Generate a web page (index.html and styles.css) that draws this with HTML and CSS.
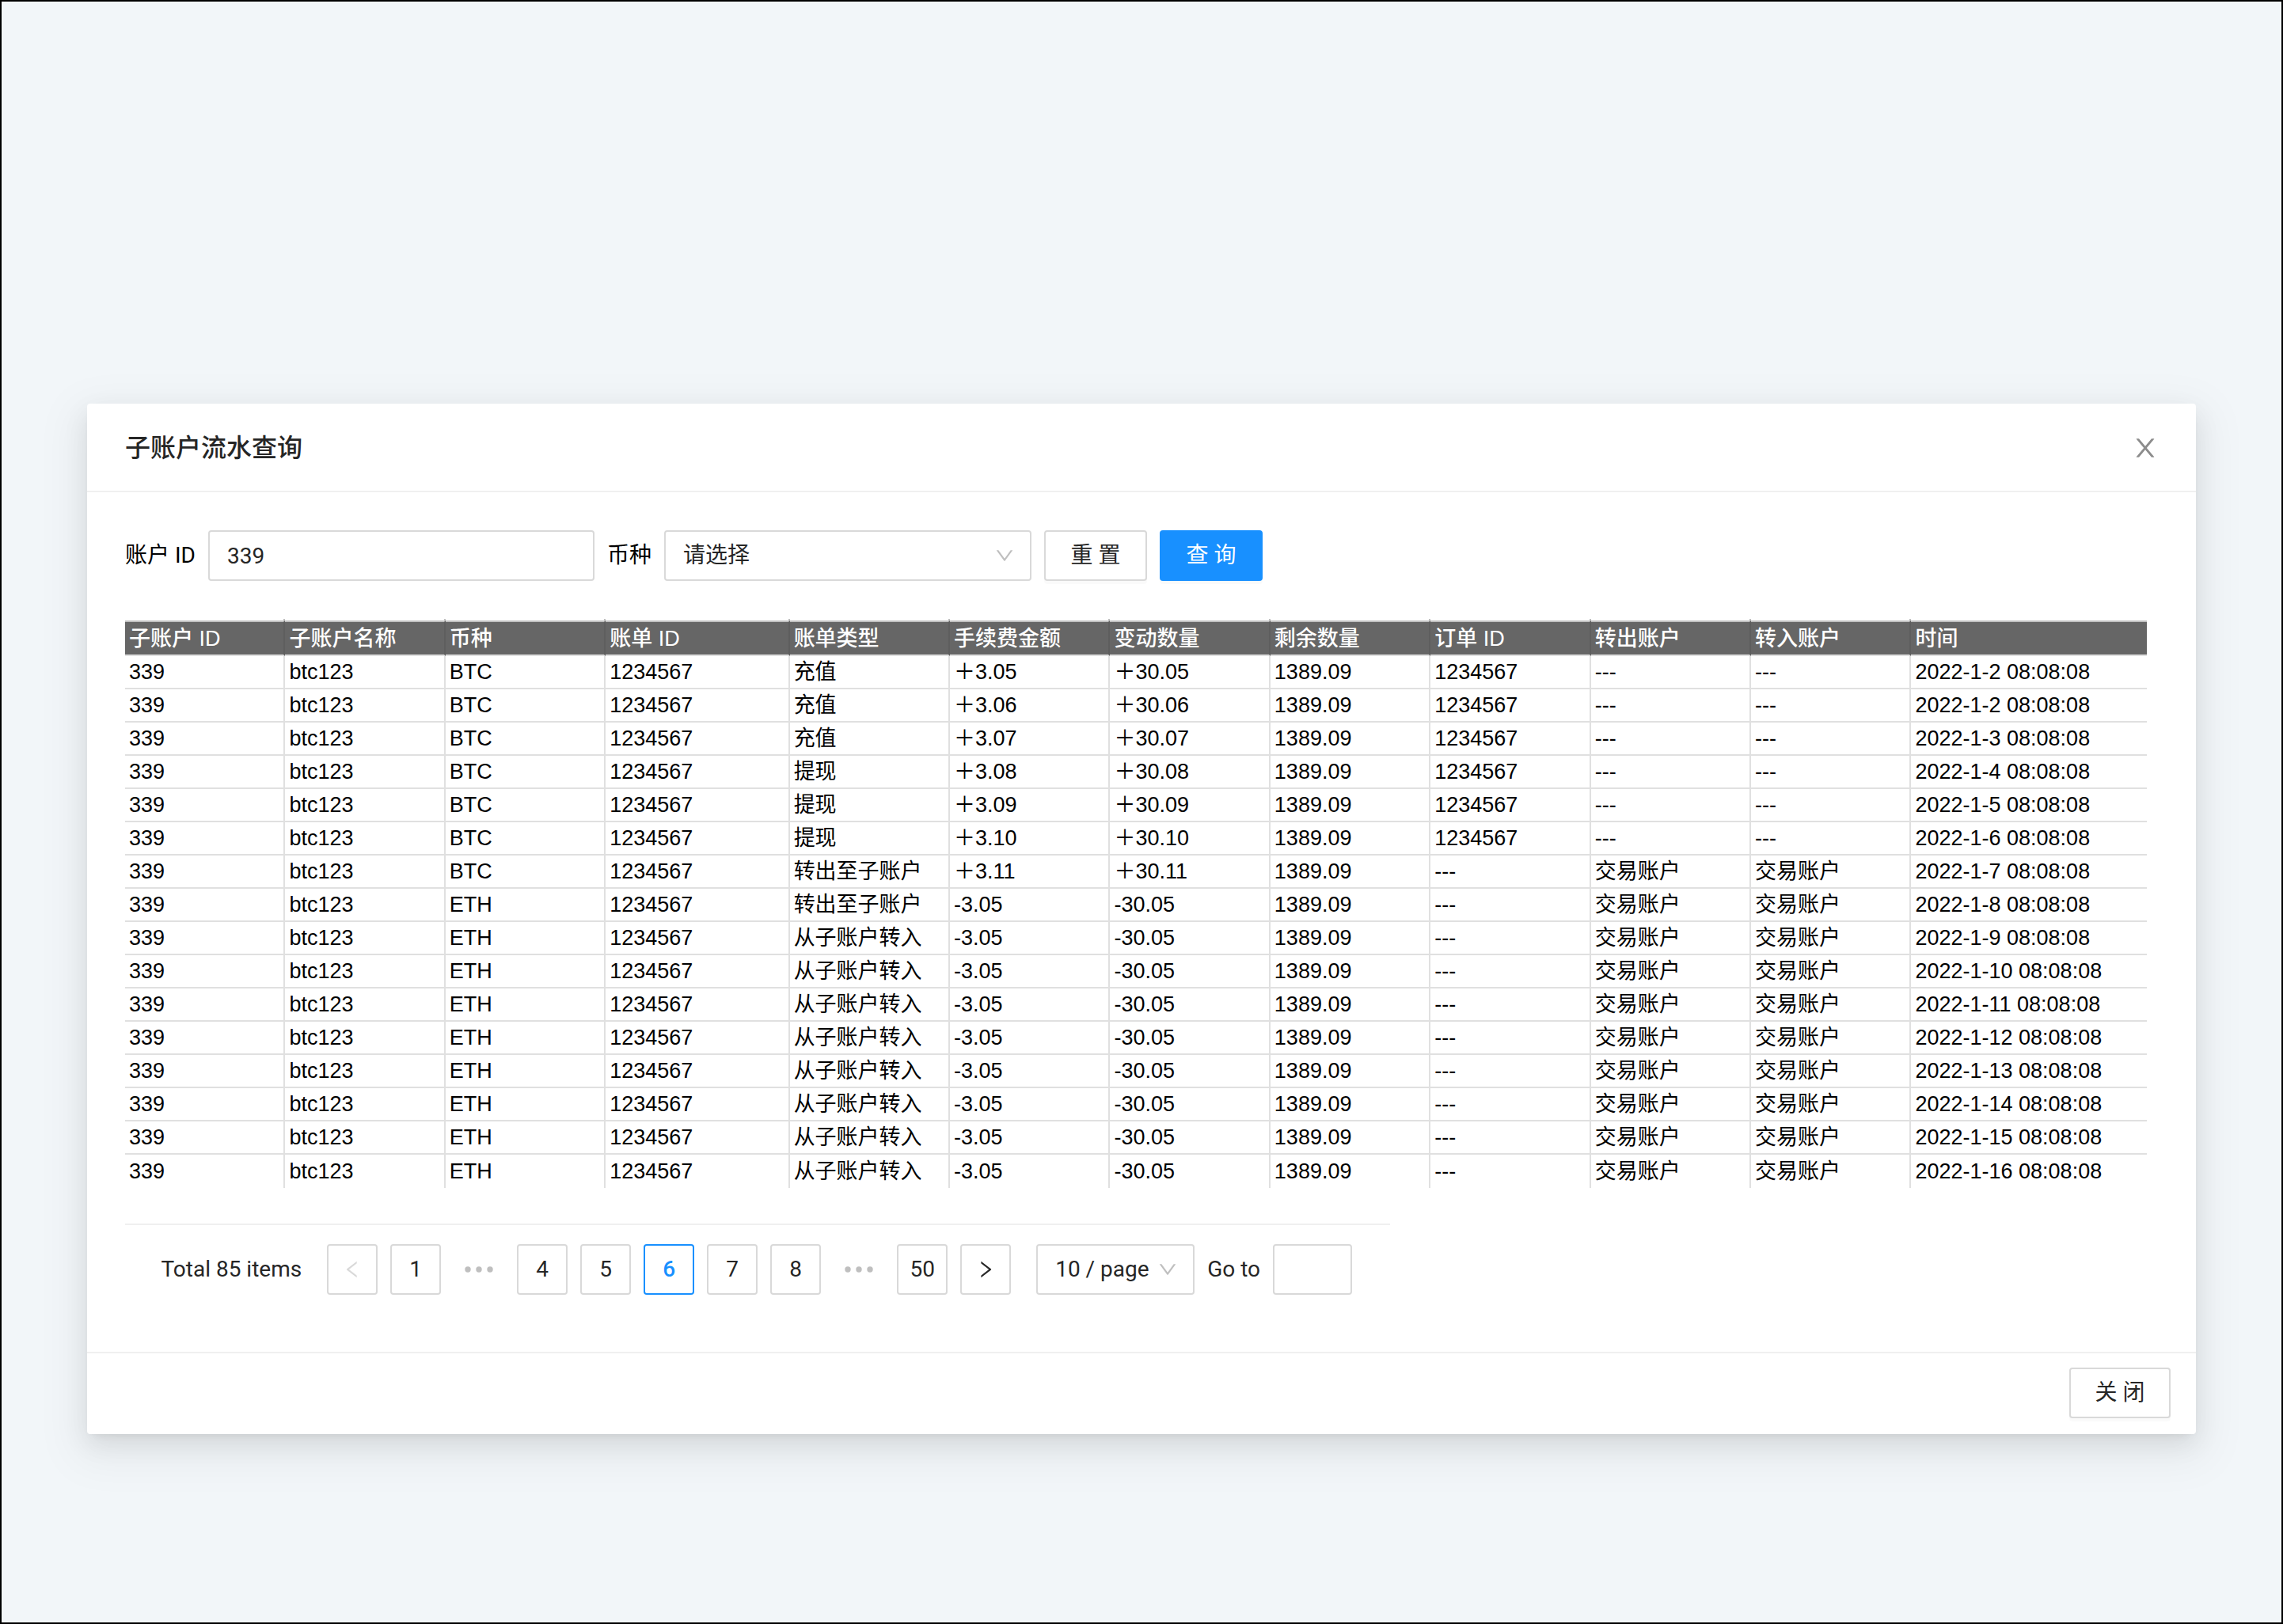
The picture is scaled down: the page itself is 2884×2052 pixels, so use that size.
FILE: index.html
```html
<!DOCTYPE html>
<html lang="zh-CN">
<head>
<meta charset="utf-8">
<meta name="viewport" content="width=device-width, initial-scale=1">
<title>子账户流水查询</title>
<link rel="stylesheet" href="styles.css">
</head>
<body>
<svg class="icon-defs" aria-hidden="true">
<symbol id="icon-close" viewBox="64 64 896 896"><path d="M563.8 512l262.5-312.9c4.4-5.2.7-13.1-6.1-13.1h-79.8c-4.7 0-9.2 2.1-12.3 5.7L511.6 449.8 295.1 191.7c-3-3.6-7.5-5.7-12.3-5.7H203c-6.8 0-10.5 7.9-6.1 13.1L459.4 512 196.9 824.9A7.95 7.95 0 0 0 203 838h79.8c4.7 0 9.2-2.1 12.3-5.7l216.5-258.1 216.5 258.1c3 3.6 7.5 5.7 12.3 5.7h79.8c6.8 0 10.5-7.9 6.1-13.1L563.8 512z"/></symbol>
<symbol id="icon-down" viewBox="64 64 896 896"><path d="M884 256h-75c-5.1 0-9.9 2.5-12.9 6.6L512 654.2 227.9 262.6c-3-4.1-7.8-6.6-12.9-6.6h-75c-6.5 0-10.3 7.4-6.5 12.7l352.6 486.1c12.8 17.6 39 17.6 51.7 0l352.6-486.1c3.9-5.3.1-12.7-6.4-12.7z"/></symbol>
<symbol id="icon-left" viewBox="64 64 896 896"><path d="M724 218.3V141c0-6.7-7.7-10.4-12.9-6.3L260.3 486.8a31.86 31.86 0 0 0 0 50.3l450.8 352.1c5.3 4.1 12.9.4 12.9-6.3v-77.3c0-4.9-2.3-9.6-6.1-12.6l-360-281 360-281.1c3.8-3 6.1-7.7 6.1-12.6z"/></symbol>
<symbol id="icon-right" viewBox="64 64 896 896"><path d="M765.7 486.8L314.9 134.7A7.97 7.97 0 0 0 302 141v77.3c0 4.9 2.3 9.6 6.1 12.6l360 281.1-360 281.1c-3.9 3-6.1 7.7-6.1 12.6V883c0 6.7 7.7 10.4 12.9 6.3l450.8-352.1a31.96 31.96 0 0 0 0-50.4z"/></symbol>
<symbol id="icon-dots" viewBox="0 0 36 8"><circle cx="4" cy="4" r="3.7"/><circle cx="18" cy="4" r="3.7"/><circle cx="32" cy="4" r="3.7"/></symbol>
</svg>
<main class="modal" role="dialog" aria-labelledby="modal-title">
<header class="modal-header">
<h1 class="modal-title" id="modal-title">子账户流水查询</h1>
<button class="modal-close" type="button" aria-label="关闭窗口"><svg><use href="#icon-close"/></svg></button>
</header>
<section class="modal-body">
<form class="filters">
<label for="account">账户 ID</label>
<input class="field account" id="account" type="text" value="339">
<label for="coin">币种</label>
<span class="select coin"><select class="field" id="coin"><option>请选择</option></select><svg class="arrow"><use href="#icon-down"/></svg></span>
<button class="btn" type="reset">重 置</button>
<button class="btn btn-primary" type="button">查 询</button>
</form>
<table class="records">
<colgroup><col><col><col><col class="wide"><col><col><col><col><col><col><col><col class="time"></colgroup>
<thead>
<tr><th>子账户 ID</th><th>子账户名称</th><th>币种</th><th>账单 ID</th><th>账单类型</th><th>手续费金额</th><th>变动数量</th><th>剩余数量</th><th>订单 ID</th><th>转出账户</th><th>转入账户</th><th>时间</th></tr>
</thead>
<tbody>
<tr><td>339</td><td>btc123</td><td>BTC</td><td>1234567</td><td>充值</td><td>＋3.05</td><td>＋30.05</td><td>1389.09</td><td>1234567</td><td>---</td><td>---</td><td>2022-1-2 08:08:08</td></tr>
<tr><td>339</td><td>btc123</td><td>BTC</td><td>1234567</td><td>充值</td><td>＋3.06</td><td>＋30.06</td><td>1389.09</td><td>1234567</td><td>---</td><td>---</td><td>2022-1-2 08:08:08</td></tr>
<tr><td>339</td><td>btc123</td><td>BTC</td><td>1234567</td><td>充值</td><td>＋3.07</td><td>＋30.07</td><td>1389.09</td><td>1234567</td><td>---</td><td>---</td><td>2022-1-3 08:08:08</td></tr>
<tr><td>339</td><td>btc123</td><td>BTC</td><td>1234567</td><td>提现</td><td>＋3.08</td><td>＋30.08</td><td>1389.09</td><td>1234567</td><td>---</td><td>---</td><td>2022-1-4 08:08:08</td></tr>
<tr><td>339</td><td>btc123</td><td>BTC</td><td>1234567</td><td>提现</td><td>＋3.09</td><td>＋30.09</td><td>1389.09</td><td>1234567</td><td>---</td><td>---</td><td>2022-1-5 08:08:08</td></tr>
<tr><td>339</td><td>btc123</td><td>BTC</td><td>1234567</td><td>提现</td><td>＋3.10</td><td>＋30.10</td><td>1389.09</td><td>1234567</td><td>---</td><td>---</td><td>2022-1-6 08:08:08</td></tr>
<tr><td>339</td><td>btc123</td><td>BTC</td><td>1234567</td><td>转出至子账户</td><td>＋3.11</td><td>＋30.11</td><td>1389.09</td><td>---</td><td>交易账户</td><td>交易账户</td><td>2022-1-7 08:08:08</td></tr>
<tr><td>339</td><td>btc123</td><td>ETH</td><td>1234567</td><td>转出至子账户</td><td>-3.05</td><td>-30.05</td><td>1389.09</td><td>---</td><td>交易账户</td><td>交易账户</td><td>2022-1-8 08:08:08</td></tr>
<tr><td>339</td><td>btc123</td><td>ETH</td><td>1234567</td><td>从子账户转入</td><td>-3.05</td><td>-30.05</td><td>1389.09</td><td>---</td><td>交易账户</td><td>交易账户</td><td>2022-1-9 08:08:08</td></tr>
<tr><td>339</td><td>btc123</td><td>ETH</td><td>1234567</td><td>从子账户转入</td><td>-3.05</td><td>-30.05</td><td>1389.09</td><td>---</td><td>交易账户</td><td>交易账户</td><td>2022-1-10 08:08:08</td></tr>
<tr><td>339</td><td>btc123</td><td>ETH</td><td>1234567</td><td>从子账户转入</td><td>-3.05</td><td>-30.05</td><td>1389.09</td><td>---</td><td>交易账户</td><td>交易账户</td><td>2022-1-11 08:08:08</td></tr>
<tr><td>339</td><td>btc123</td><td>ETH</td><td>1234567</td><td>从子账户转入</td><td>-3.05</td><td>-30.05</td><td>1389.09</td><td>---</td><td>交易账户</td><td>交易账户</td><td>2022-1-12 08:08:08</td></tr>
<tr><td>339</td><td>btc123</td><td>ETH</td><td>1234567</td><td>从子账户转入</td><td>-3.05</td><td>-30.05</td><td>1389.09</td><td>---</td><td>交易账户</td><td>交易账户</td><td>2022-1-13 08:08:08</td></tr>
<tr><td>339</td><td>btc123</td><td>ETH</td><td>1234567</td><td>从子账户转入</td><td>-3.05</td><td>-30.05</td><td>1389.09</td><td>---</td><td>交易账户</td><td>交易账户</td><td>2022-1-14 08:08:08</td></tr>
<tr><td>339</td><td>btc123</td><td>ETH</td><td>1234567</td><td>从子账户转入</td><td>-3.05</td><td>-30.05</td><td>1389.09</td><td>---</td><td>交易账户</td><td>交易账户</td><td>2022-1-15 08:08:08</td></tr>
<tr><td>339</td><td>btc123</td><td>ETH</td><td>1234567</td><td>从子账户转入</td><td>-3.05</td><td>-30.05</td><td>1389.09</td><td>---</td><td>交易账户</td><td>交易账户</td><td>2022-1-16 08:08:08</td></tr>
</tbody>
</table>
<nav class="pagination" aria-label="分页">
<span>Total 85 items</span>
<div class="pages">
<button class="page" type="button" aria-label="上一页" disabled><svg><use href="#icon-left"/></svg></button>
<button class="page" type="button">1</button>
<span class="dots"><svg><use href="#icon-dots"/></svg></span>
<button class="page" type="button">4</button>
<button class="page" type="button">5</button>
<button class="page active" type="button" aria-current="page">6</button>
<button class="page" type="button">7</button>
<button class="page" type="button">8</button>
<span class="dots"><svg><use href="#icon-dots"/></svg></span>
<button class="page" type="button">50</button>
<button class="page" type="button" aria-label="下一页"><svg><use href="#icon-right"/></svg></button>
</div>
<div class="jump">
<span class="select size"><select class="field" aria-label="每页条数"><option>10 / page</option></select><svg class="arrow"><use href="#icon-down"/></svg></span>
<label for="goto">Go to</label>
<input class="field goto" id="goto" type="text">
</div>
</nav>
</section>
<footer class="modal-footer"><button class="btn" type="button">关 闭</button></footer>
</main>
</body>
</html>
```

FILE: styles.css
```css
*, *::before, *::after { box-sizing: border-box; }

body {
  min-height: 100vh;
  margin: 0;
  padding: 508px 108px 238px;
  border: 2px solid #000;
  background: #f2f6f9;
  color: #262626;
  font: 28px/44px Roboto, "Noto Sans CJK SC", sans-serif;
}

button, input, select { font: inherit; color: inherit; }

svg { display: block; fill: currentColor; }

.icon-defs { position: absolute; width: 0; height: 0; }

.modal {
  border-radius: 4px;
  background: #fff;
  box-shadow:
    0 6px 12px -8px rgba(0, 0, 0, .12),
    0 12px 32px rgba(0, 0, 0, .08),
    0 18px 56px 16px rgba(0, 0, 0, .05);
}

.modal-header {
  display: flex;
  align-items: center;
  justify-content: space-between;
  padding: 32px 48px 30px;
  border-bottom: 2px solid #f0f0f0;
}

.modal-title { margin: 0; font-size: 32px; line-height: 48px; font-weight: 500; }

.modal-close { padding: 0; border: 0; background: none; color: #8c8c8c; }
.modal-close svg { width: 32px; height: 32px; }

.modal-body { padding: 48px 62px 72px 48px; }

.filters {
  display: flex;
  align-items: center;
  gap: 16px;
  margin-bottom: 50px;
  color: #000;
}

.field {
  width: 100%;
  height: 64px;
  padding: 0 22px;
  border: 2px solid #d9d9d9;
  border-radius: 4px;
  background: #fff;
  color: #262626;
  appearance: none;
}

.account { width: 488px; }
.goto { width: 100px; }

.select { position: relative; }
.coin { width: 464px; }
.size { width: 200px; }

.arrow {
  position: absolute;
  top: 20px;
  right: 22px;
  width: 24px;
  height: 24px;
  color: #bfbfbf;
  pointer-events: none;
}

.btn {
  min-width: 128px;
  height: 64px;
  padding: 0 30px;
  border: 2px solid #d9d9d9;
  border-radius: 4px;
  background: #fff;
  box-shadow: 0 4px 0 rgba(0, 0, 0, .02);
  color: #262626;
}

.filters .btn { min-width: 130px; }

.btn-primary { border-color: #1890ff; background: #1890ff; color: #fff; }
.filters .btn-primary { color: #fff; }

.records {
  width: 100%;
  table-layout: fixed;
  border-spacing: 0;
  color: #000;
  font: 27px/40px "Liberation Sans", "Noto Sans CJK SC", sans-serif;
}

/* Column widths are proportions of the table width */
.records col { width: 81px; }
.records .wide { width: 93px; }
.records .time { width: 119px; }

.records th, .records td {
  padding: 0 5px;
  border-right: 2px solid #e0e0e0;
  border-bottom: 2px solid #e0e0e0;
  text-align: left;
  font-weight: 400;
  white-space: nowrap;
}

.records th {
  position: relative;
  height: 45px;
  border-top: 2px solid #bfbfbf;
  border-right-color: #5e5e5e;
  background: #666;
  color: #fff;
  font-weight: 500;
}

/* Column rules reach slightly above the header */
.records th:not(:last-child)::after {
  content: "";
  position: absolute;
  top: -4px;
  right: -2px;
  width: 2px;
  height: 2px;
  background: #bfbfbf;
}

.records th:last-child, .records td:last-child { border-right: 0; }
.records tbody tr:last-child td { height: 42px; border-bottom: 0; }

.pagination {
  display: flex;
  align-items: center;
  justify-content: flex-end;
  gap: 32px;
  max-width: 1598px;
  margin-top: 45px;
  padding: 24px 48px 0 0;
  border-top: 2px solid #f0f0f0;
}

.pages, .jump { display: flex; align-items: center; gap: 16px; }

.page, .dots {
  display: flex;
  align-items: center;
  justify-content: center;
  width: 64px;
  height: 64px;
}

.page {
  padding: 0;
  border: 2px solid #d9d9d9;
  border-radius: 4px;
  background: #fff;
}

.page svg { width: 24px; height: 24px; }
.page:disabled { color: #d9d9d9; }
.page.active { border-color: #1890ff; color: #1890ff; font-weight: 500; }

.dots { color: #bfbfbf; }
.dots svg { width: 36px; height: 8px; }

.modal-footer {
  display: flex;
  justify-content: flex-end;
  padding: 18px 32px 20px;
  border-top: 2px solid #f0f0f0;
}
```
